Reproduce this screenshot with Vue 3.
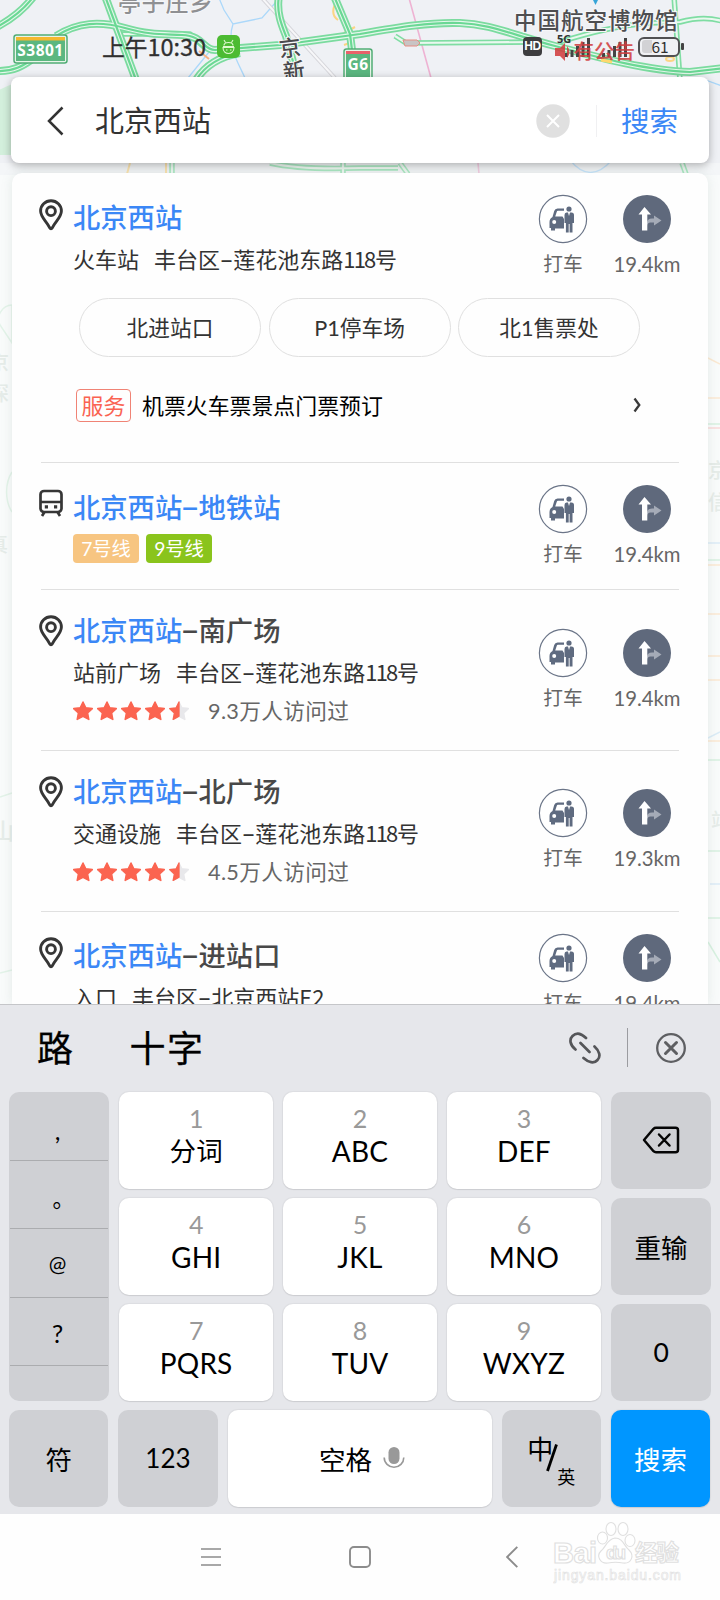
<script setup>
const places = [
  { kind: 'first', icon: 'pin', name: '北京西站', rest: '', type: '火车站', area: '丰台区', road: '莲花池东路', num: '118', tail: '号', km: '19.4km', pills: ['北进站口', 'P1停车场', '北1售票处'] },
  { kind: 'metro', icon: 'bus', name: '北京西站', rest: '地铁站', blueRest: true, km: '19.4km', lines: [{ t: '7号线', c: 'orange' }, { t: '9号线', c: 'green' }] },
  { kind: 'rated', icon: 'pin', name: '北京西站', rest: '南广场', type: '站前广场', area: '丰台区', road: '莲花池东路', num: '118', tail: '号', km: '19.4km', visits: '9.3万人访问过' },
  { kind: 'rated second', icon: 'pin', name: '北京西站', rest: '北广场', type: '交通设施', area: '丰台区', road: '莲花池东路', num: '118', tail: '号', km: '19.3km', visits: '4.5万人访问过' },
  { kind: 'last', icon: 'pin', name: '北京西站', rest: '进站口', type: '入口', area: '丰台区', road: '北京西站', num: 'E2', tail: '', km: '19.4km' },
]
const keys = [
  [['1', '分词'], ['2', 'ABC'], ['3', 'DEF']],
  [['4', 'GHI'], ['5', 'JKL'], ['6', 'MNO']],
  [['7', 'PQRS'], ['8', 'TUV'], ['9', 'WXYZ']],
]
const roads = [
  'M-5,28 Q20,15 34,-4',
  'M-5,71 C14,72 24,65 31,60',
  'M56,36 C78,22 100,21 125,28 S160,34 182,35 S203,50 215,50 L280,45 L360,34 C400,27 430,22 460,23 S510,34 555,46 S650,71 690,72 L725,68',
  'M105,-4 L136,80',
  'M279,-4 C276,12 282,26 286,36 L298,80',
  'M334,-4 L350,34 L352,50',
  'M196,80 Q210,58 240,53',
]
const thin = ['M395,36 L406,43 L540,42', 'M120,34 L190,34 L205,48', 'M560,42 Q610,26 650,23 L680,22 Q705,15 725,22', 'M674,-4 L680,80', 'M172,163 V174', 'M343,163 V174', 'M270,163 Q300,170 360,168 L398,168', 'M400,163 L408,174', 'M682,163 L686,174']
const starPath = 'M10 1 L12.8 6.8 L19.3 7.6 L14.6 12 L15.8 18.4 L10 15.3 L4.2 18.4 L5.4 12 L.7 7.6 L7.2 6.8 Z'
</script>

<template>
  <div class="phone">
    <svg class="map" viewBox="0 0 720 1004" width="720" height="1004">
      <rect width="720" height="1004" fill="#eff1f5" />
      <path d="M-5,92 Q15,82 24,80 V155 L-5,155Z" fill="#d3efdc" />
      <g fill="none" stroke="#abd8fa" stroke-width="1.3">
        <path d="M219,-2 L224,10 L233,24 L262,18 L276,2 M233,24 C226,45 238,62 245,78 M209,52 L188,78 M700,78 L722,86 M570,160 Q590,185 612,160" />
      </g>
      <path d="M262,-2 L335,78" fill="none" stroke="#d5d5da" stroke-width="4" />
      <path d="M262,-2 L335,78" fill="none" stroke="#f7f7f9" stroke-width="2" />
      <path d="M409,-2 L431,78 M478,163 L479,174" fill="none" stroke="#eeb3d3" stroke-width="1.6" />
      <g fill="none" stroke="#fbd584" stroke-width="2">
        <path d="M337,0 Q329,14 338,20 M344,33 L355,27 M344,45 L352,42 M130,163 L127,174 M166,163 V174" />
        <ellipse cx="670" cy="59" rx="4" ry="2" />
      </g>
      <g fill="none" stroke-linejoin="round">
        <path v-for="d in thin" :key="d" :d="d" stroke="#7fdda3" stroke-width="5.500" />
        <path v-for="d in thin" :key="d + 'i'" :d="d" stroke="#e9f8ef" stroke-width="2.200" />
        <path v-for="d in roads" :key="d + 'a'" :d="d" stroke="#7bdb9f" stroke-width="8" />
        <path v-for="d in roads" :key="d + 'b'" :d="d" stroke="#e4f7ec" stroke-width="4.400" />
        <path v-for="d in roads" :key="d + 'c'" :d="d" stroke="#6ad894" stroke-width="2.200" />
      </g>
      <path d="M199,51 L209,59" stroke="#f7b183" stroke-width="2" />
      <path d="M601,60 L612,62" stroke="#ffd86e" stroke-width="3" />
      <path d="M403,40 h14 l3,3 l-3,3 h-12z" fill="#c9c4c4" stroke="#e58d83" stroke-width="1" />
      <path d="M593,0 h5 l-2.500,5z" fill="#37a5d8" />
      <g class="label">
        <text x="118" y="11" font-size="23" fill="#8f9093" letter-spacing="0.8">亭子庄乡</text>
        <text x="514" y="29" font-size="22.500" fill="#4e4e50" letter-spacing="1">中国航空博物馆</text>
        <text x="279" y="56" font-size="22" fill="#4a4a4c" transform="rotate(-7 290 48)">京</text>
        <text x="283" y="79" font-size="22" fill="#4a4a4c" transform="rotate(-7 294 72)">新</text>
      </g>
      <g>
        <rect x="14" y="35" width="53" height="28" rx="2.500" fill="#e8f5e9" stroke="#51ad75" stroke-width="1.500" />
        <rect x="16" y="40" width="49" height="21" fill="#5bb780" />
        <rect x="16" y="37" width="49" height="3.500" fill="#f5b82e" />
        <text x="40.500" y="55.500" text-anchor="middle" class="shield" font-size="15.500">S3801</text>
        <rect x="344" y="49" width="28" height="32" rx="2.500" fill="#e8f5e9" stroke="#51ad75" stroke-width="1.500" />
        <rect x="346" y="54" width="24" height="25" fill="#5bb780" />
        <rect x="346" y="51" width="24" height="3" fill="#e9616a" />
        <text x="358" y="70" text-anchor="middle" class="shield" font-size="15.500">G6</text>
      </g>
      <rect y="163" width="720" height="841" fill="#fff" opacity=".35" />
      <rect y="175" width="720" height="829" fill="#fafcfb" opacity=".9" />
      <g fill="none" stroke-width="1.500">
        <path d="M0,325 a14,14 0 0 1 12,-20 v38z M12,472 a18,28 0 0 0 0,40 M0,797 L12,793 M0,973 L12,970" stroke="#e3f3e9" />
        <path d="M708,424 h12 M708,560 h12 M708,760 h12 M708,851 h12 M708,918 h12 M708,942 L720,962" stroke="#d8f1e1" />
        <path d="M708,358 L720,364 M708,398 h12 M708,565 h12 M708,614 h12 M708,656 h12 M708,680 h12 M708,741 h12" stroke="#fbe9d3" />
        <path d="M708,428 h12" stroke="#f9dada" />
        <path d="M708,543 h12 M708,738 l12,-6 M710,884 h10" stroke="#dbecf7" />
      </g>
      <g class="label ghost">
        <text x="-11" y="370" font-size="20">京</text>
        <text x="-11" y="401" font-size="20">深</text>
        <text x="-12" y="552" font-size="20">真</text>
        <text x="-8" y="839" font-size="22">山</text>
        <text x="708" y="478" font-size="20">京</text>
        <text x="708" y="510" font-size="20">信</text>
        <text x="711" y="828" font-size="20">站</text>
      </g>
    </svg>

    <header class="status">
      <span class="clock">上午<span class="time">10:30</span></span>
      <svg class="android" width="23" height="23" viewBox="0 0 23 23">
        <rect width="23" height="23" rx="5" fill="#4cbb32" />
        <g fill="none" stroke="#dff8cf" stroke-width="1.100"><path d="M6 11.500h11M7 10.500c0-4 9-4 9 0M6 12.500h11c0 8-11 8-11 0zM7 5l1.500 2.500M16 5l-1.500 2.500M9 15h1.500M13 15h1.500" /></g>
      </svg>
      <span class="hd">HD</span>
      <svg class="signals" width="84" height="32" viewBox="0 0 84 32">
        <text x="5" y="14" class="five">5G</text>
        <g fill="#444"><rect x="13" y="24" width="3" height="4" /><rect x="18.500" y="21" width="3" height="7" /><rect x="24" y="17" width="3" height="11" /><rect x="29.500" y="13" width="3" height="15" /><rect x="35" y="9" width="3" height="19" /><rect x="50" y="24" width="3" height="4" /><rect x="55.500" y="21" width="3" height="7" /><rect x="61" y="17" width="3" height="11" /><rect x="66.500" y="13" width="3" height="15" /><rect x="72" y="9" width="3" height="19" /></g>
        <path d="M3 19h5l5-5v18l-5-5H3z M15 17q5 6 0 12" fill="#d13d3f" opacity=".88" />
        <text x="21.500" y="30" class="notice">有公告</text>
      </svg>
      <span class="battery"><span class="level"></span><span class="pct">61</span></span><i class="nub"></i>
    </header>

    <section class="search">
      <svg class="back" width="18" height="30" viewBox="0 0 18 30"><path d="M15.500 1.500 L2 15 L15.500 28.500" fill="none" stroke="#333" stroke-width="2.500" /></svg>
      <span class="query">北京西站</span>
      <svg class="clear" width="34" height="34" viewBox="0 0 34 34"><circle cx="17" cy="17" r="16.700" fill="#e0e0e0" /><path d="M11 11l12 12M23 11L11 23" stroke="#fff" stroke-width="2" /></svg>
      <i class="sep"></i>
      <span class="go">搜索</span>
    </section>

    <main class="results">
      <article v-for="(p, i) in places" :key="i" class="place" :class="p.kind">
        <div class="lead">
          <svg v-if="p.icon === 'pin'" width="24" height="32" viewBox="0 0 24 32" fill="none" stroke="#363636">
            <path d="M12 1.800 C6.200 1.800 1.600 6.200 1.600 12 C1.600 18.500 8 22.500 10.500 28.500 Q12 31 13.500 28.500 C16 22.500 22.400 18.500 22.400 12 C22.400 6.200 17.800 1.800 12 1.800Z" stroke-width="2.900" />
            <circle cx="12" cy="12.200" r="4.400" stroke-width="2.900" />
          </svg>
          <svg v-else width="24" height="28" viewBox="0 0 24 28" fill="none" stroke="#363636" stroke-width="2.700">
            <rect x="1.500" y="2" width="21" height="21" rx="3.500" /><path d="M1.500 13h21M5.500 23l-2.500 4M18.500 23l2.500 4" /><path d="M5.800 17.900h3.200M15 17.900h3.200" stroke-width="3.200" />
          </svg>
        </div>
        <div class="info">
          <h2><span class="hit">{{ p.name }}</span><span v-if="p.rest" :class="{ hit: p.blueRest }"><i class="dash">-</i>{{ p.rest }}</span></h2>
          <p v-if="p.type" class="addr"><span class="type">{{ p.type }}</span><span>{{ p.area }}<i class="dash">-</i>{{ p.road }}<span class="num">{{ p.num }}</span>{{ p.tail }}</span></p>
          <div v-if="p.lines" class="lines"><span v-for="l in p.lines" :key="l.t" :class="l.c">{{ l.t }}</span></div>
          <div v-if="p.visits" class="rating">
            <svg v-for="n in 5" :key="n" width="24" height="20" viewBox="0 0 24 20">
              <path :d="starPath" :fill="n < 5 ? '#fb6450' : '#e8e8eb'" :stroke="n < 5 ? '#fb6450' : '#e8e8eb'" stroke-width="1.500" stroke-linejoin="round" />
              <path v-if="n === 5" d="M10 1 L7.200 6.800 L.7 7.600 L5.400 12 L4.200 18.400 L10 15.300Z" fill="#fb6450" stroke="#fb6450" stroke-width="1.300" stroke-linejoin="round" />
            </svg>
            <span class="visits">{{ p.visits }}</span>
          </div>
          <template v-if="p.pills">
            <div class="pills"><span v-for="t in p.pills" :key="t">{{ t }}</span></div>
            <div class="service"><b>服务</b><span>机票火车票景点门票预订</span>
              <svg width="9" height="16" viewBox="0 0 9 16"><path d="M1.500 1.500 L6.300 8 L1.500 14.500" fill="none" stroke="#3a3a3a" stroke-width="2.300" /></svg>
            </div>
          </template>
        </div>
        <div class="action taxi">
          <svg width="50" height="50" viewBox="0 0 50 50">
            <circle cx="25" cy="25" r="23.600" fill="#fff" stroke="#6b7588" stroke-width="1.200" />
            <g fill="#5f6b80">
              <path fill-rule="evenodd" d="M26 14.500 H19.500 Q17 14.500 16.200 17 L14.500 23 Q11.500 24.500 11.500 28 V34 H13 V36.500 H17 V34.500 H26 V25 L24.500 22.500 H17.200 L18.700 18 Q19 16.800 20 16.800 H26Z M16.200 26 a2 2 0 1 1 0 4 a2 2 0 0 1 0-4z" />
              <circle cx="31" cy="15" r="2.600" />
              <path d="M28.500 18.500 H30 L31 22 L32 18.500 H33.500 Q36 18.500 36 21 V29 H34.500 V38.500 H31.600 V30 H30.700 V38.500 H27.900 V29 H26.500 V21 Q26.500 18.500 28.500 18.500Z" />
            </g>
          </svg>
          <span>打车</span>
        </div>
        <div class="action route">
          <svg width="50" height="50" viewBox="0 0 50 50">
            <circle cx="25" cy="25" r="24" fill="#5f697c" />
            <path d="M25 32 V29 Q25 24.500 30 24.500 H32 V21.500 L39.500 26.500 L32 31.500 V28.500 H28 Q25 29 25 32Z" fill="#a5abb7" />
            <path d="M22.500 13 L29 20.500 H25.300 V36.500 H20 V20.500 H16.500Z" fill="#fff" />
          </svg>
          <span>{{ p.km }}</span>
        </div>
      </article>
    </main>

    <section class="keyboard">
      <div class="suggest">
        <span class="c1">路</span><span class="c2">十字</span>
        <svg class="link" width="34" height="34" viewBox="0 0 34 34" fill="none" stroke="#555659" stroke-width="2.700" stroke-linecap="round">
          <path d="M7.500 18.500 C2 14 1 8.500 4.500 5 C8.500 1 13.500 2.500 18 7 M15.500 27 C20.500 31.500 26 33 29.500 29 C33 25.500 31.500 20 26.500 15.500 M12.500 12 L21.500 21" />
        </svg>
        <i class="bar"></i>
        <svg class="close" width="32" height="32" viewBox="0 0 32 32" fill="none" stroke="#5e5f62"><circle cx="16" cy="16" r="13.800" stroke-width="2.300" /><path d="M10.500 10.500l11 11M21.500 10.500l-11 11" stroke-width="3" stroke-linecap="round" /></svg>
      </div>
      <div class="grid">
        <div class="key grey marks"><span>,</span><span class="stop">。</span><span class="at">@</span><span class="ask">?</span><span></span></div>
        <template v-for="(row, r) in keys" :key="r">
          <div v-for="k in row" :key="k[0]" class="key letter"><small>{{ k[0] }}</small><span>{{ k[1] }}</span></div>
          <div class="key grey side">
            <svg v-if="r === 0" width="38" height="28" viewBox="0 0 38 28" fill="none" stroke="#050505" stroke-width="2.500" stroke-linejoin="round" stroke-linecap="round"><path d="M14 1.800 H33.500 Q36 1.800 36 4.300 V23.700 Q36 26.200 33.500 26.200 H14 Q12.500 26.200 11.500 25.200 L2 14 L11.500 2.800 Q12.500 1.800 14 1.800Z M17 8.500l10.500 11M27.500 8.500L17 19.500" /></svg>
            <span v-else>{{ r === 1 ? '重输' : '0' }}</span>
          </div>
        </template>
      </div>
      <div class="bottom">
        <div class="key grey">符</div>
        <div class="key grey digits">123</div>
        <div class="key space">空格
          <svg width="22" height="24" viewBox="0 0 22 24"><rect x="5.500" y="1" width="11" height="17" rx="5.500" fill="#999" /><path d="M1.200 11.500 a9.800 9.800 0 0 0 19.600 0" fill="none" stroke="#999" stroke-width="1.600" /></svg>
        </div>
        <div class="key grey lang"><span class="zh">中</span><svg width="14" height="30" viewBox="0 0 14 30"><path d="M11.500 1.500 L2.500 28" stroke="#000" stroke-width="2.800" /></svg><span class="en">英</span></div>
        <div class="key enter">搜索</div>
      </div>
    </section>

    <nav class="nav">
      <svg width="20" height="20" viewBox="0 0 20 20"><path d="M0 2h20M0 10h20M0 18h20" stroke="#8c8c8c" stroke-width="1.700" /></svg>
      <svg width="22" height="22" viewBox="0 0 22 22"><rect x="1" y="1" width="20" height="20" rx="4" fill="none" stroke="#8c8c8c" stroke-width="1.900" /></svg>
      <svg width="12" height="22" viewBox="0 0 12 22"><path d="M11.300 .8 L1.200 11 L11.300 21.200" fill="none" stroke="#8c8c8c" stroke-width="1.900" /></svg>
      <svg class="mark" width="136" height="66" viewBox="0 0 136 66">
        <g fill="#fff" stroke="#e0e0e0" stroke-width="1.100">
          <text x="0" y="43" class="logo" font-size="29" textLength="44">Bai</text>
          <path d="M62 18 C54 19 53 27 48 31 C43 36 47 44 55 43 C60 42 65 42 70 43 C78 44 82 36 76 30 C71 26 70 18 62 18Z" />
          <ellipse cx="49.500" cy="18" rx="5" ry="6" /><ellipse cx="58" cy="9" rx="5" ry="6.500" /><ellipse cx="70" cy="9" rx="5" ry="6.500" /><ellipse cx="77" cy="20.500" rx="5" ry="6" />
          <text x="53" y="39" class="logo" font-size="19" textLength="20">du</text>
          <text x="82" y="41" class="logo" font-size="22.500" textLength="44">经验</text>
          <text x="1" y="60" class="url" font-size="14" textLength="127">jingyan.baidu.com</text>
        </g>
      </svg>
    </nav>
  </div>
</template>

<style>
body { margin: 0; background: #fff; }
</style>

<style scoped>
* { box-sizing: border-box; }
.phone { position: relative; width: 720px; height: 1600px; overflow: hidden; display: flex; flex-direction: column; font-family: Lato, "Noto Sans CJK SC", sans-serif; color: #333; background: #fefefe; }
.phone svg { flex: none; display: block; }
.map { position: absolute; left: 0; top: 0; }
.label { font-family: "Noto Sans CJK SC", sans-serif; font-weight: 500; paint-order: stroke; stroke: #f6f7f9; stroke-width: 2px; }
.ghost { fill: #e6ece9; stroke: none; }
.shield { font-family: "Open Sans", sans-serif; font-weight: 700; fill: #fff; letter-spacing: .5px; }
.status { position: relative; height: 77px; flex: none; display: flex; align-items: center; padding: 16px 0 0 102px; }
.clock { width: 115px; font-size: 22.700px; line-height: 28px; color: #2f2f2f; white-space: nowrap; -webkit-text-stroke: .3px #2f2f2f; }
.time { font-family: "Noto Sans CJK SC", sans-serif; font-size: 23.500px; }
.hd { width: 19px; height: 19px; margin-left: 283px; border-radius: 4px; background: #3d3d3f; color: #fff; font: 700 12px/19px "Liberation Sans", sans-serif; text-align: center; letter-spacing: -.5px; }
.signals { margin: -3px 0 0 10px; }
.five { font: 700 11px "Open Sans", sans-serif; fill: #333; }
.notice { font: 500 20.500px "Noto Sans CJK SC", sans-serif; fill: #d13d3f; opacity: .88; }
.battery { position: relative; width: 42px; height: 20px; margin-left: 2px; border: 2.500px solid #505052; border-radius: 6px; background: #f0f1f4; color: #303030; text-align: center; }
.level { position: absolute; left: 2px; top: 1px; width: 10px; height: 13px; border-radius: 3px 0 0 3px; background: #d2d2d5; }
.pct { position: relative; display: block; font: 400 15.500px/15px "Noto Sans CJK SC", sans-serif; padding-left: 2px; }
.nub { width: 2.500px; height: 7px; margin-left: 1px; background: #444; border-radius: 1px; }
.search { position: relative; flex: none; height: 86px; width: 698px; margin-left: 11px; border-radius: 8px; background: #fff; box-shadow: 0 2px 9px rgba(0,0,0,.3); display: flex; align-items: center; padding: 1px 31px 0 36px; }
.query { margin-left: 30px; font-size: 29px; line-height: 40px; }
.clear { margin-left: auto; }
.sep { width: 1px; height: 32px; margin: 0 24px 0 26px; background: #f0f0f2; }
.go { font-size: 28.500px; line-height: 40px; color: #3b87f6; }
.results { position: relative; flex: none; height: 831px; width: 696px; margin: 10px 0 0 12px; border-radius: 10px 10px 0 0; background: #fefefe; overflow: hidden; padding: 0 29px; box-shadow: 0 0 12px rgba(120,140,130,.16); }
.place { display: grid; grid-template-columns: 32px 1fr 86px 82px; margin-right: -10px; position: relative; height: 127px; }
.place::after { content: ""; position: absolute; left: 0; right: 10px; bottom: 0; height: 1px; background: #e0e0e0; }
.place.first { height: 290px; }
.place.rated { height: 161px; }
.place.second { height: 160.500px; }
.place.last { height: 127px; }
.lead { padding-top: 25.500px; margin-left: -2px; }
.rated .lead, .last .lead { padding-top: 25px; }
.info { padding-top: 30px; min-width: 0; white-space: nowrap; }
.metro .info { padding-top: 29.500px; }
.rated .info { padding-top: 26px; }
.last .info { padding-top: 29.500px; }
h2 { margin: 0; font-size: 27.300px; line-height: 30px; font-weight: 500; color: #484848; }
.hit { color: #3b87f6; }
.dash { display: inline-block; font-style: normal; font-family: "Liberation Sans", sans-serif; width: .6em; text-align: center; transform: translateY(-.08em) scale(2.05, 1.2); }
.addr { margin: 9px 0 0; font-size: 22px; line-height: 32px; color: #333; }
.addr .dash { transform: translateY(-.06em) scale(1.85, 1); }
.type { margin-right: 15px; }
.num { font-family: "Noto Sans CJK SC", sans-serif; letter-spacing: -1.800px; margin-right: .5px; }
.last .num { letter-spacing: 0; }
.last .addr { margin-top: 8px; }
.lines { display: flex; gap: 7px; margin-top: 10px; }
.lines span { width: 66px; height: 29px; border-radius: 4px; background: #f7c581; color: #fff; font-size: 19.300px; line-height: 29px; text-align: center; }
.lines .green { background: #8ac41c; }
.rated .addr { margin-top: 8px; }
.rating { display: flex; align-items: center; height: 32px; margin-top: 4.500px; }
.visits { margin-left: 15px; font-size: 21.700px; line-height: 32px; color: #666; letter-spacing: .3px; }
.pills { display: flex; gap: 7.500px; margin: 21px 0 0 6px; position: relative; z-index: 1; }
.pills span { flex: none; width: 182px; height: 59px; border: 1px solid #e0e0e0; border-radius: 30px; font-size: 21.700px; line-height: 58px; text-align: center; color: #333; }
.service { display: flex; align-items: center; width: 566px; margin: 31.500px 0 0 3px; font-size: 21.900px; line-height: 33px; color: #000; }
.service b { width: 55px; height: 33px; border: 1.500px solid #f08375; border-radius: 4px; margin-right: 11px; font-weight: 400; line-height: 31px; text-align: center; color: #fa6352; }
.service svg { margin-left: auto; }
.action { display: flex; flex-direction: column; align-items: center; padding-top: 21px; font-size: 19.700px; color: #666; }
.action svg { margin-bottom: 6px; }
.action span { line-height: 28px; white-space: nowrap; }
.taxi { margin-left: -1px; margin-right: 1px; }
.route { margin-left: -1px; margin-right: 1px; }
.action.route { font-size: 20.300px; }
.rated .action { padding-top: 37.500px; }
.second .action { padding-top: 37px; }
.keyboard { position: relative; flex: none; height: 510px; background: #e6e7eb; border-top: 1px solid #c5c6c9; padding: 0 9px; color: #000; }
.suggest { height: 87px; display: flex; align-items: center; font-size: 36px; line-height: 42px; padding-bottom: 2px; -webkit-text-stroke: .3px #000; }
.c1 { margin-left: 28px; }
.c2 { margin-left: 56.500px; letter-spacing: 1.500px; }
.link { margin-left: auto; }
.bar { width: 1px; height: 39px; background: #9b9ca0; margin: 0 27px 0 25.500px; }
.close { margin-right: 24px; }
.grid { display: grid; grid-template-columns: 100px 153.500px 153.500px 153.500px 100px; grid-template-rows: repeat(3, 96.500px); gap: 9.500px 10.400px; }
.key { border-radius: 10px; background: #fff; box-shadow: 0 0 1px 1px rgba(0,0,0,.04), 0 1px 1px rgba(0,0,0,.08); display: flex; align-items: center; justify-content: center; font-size: 26.500px; }
.grey { background: #cfd0d4; box-shadow: none; }
.letter { flex-direction: column; justify-content: flex-start; padding-top: 10.500px; }
.letter small { font-size: 25px; line-height: 31px; color: #999; }
.letter span { font-size: 28px; line-height: 34px; letter-spacing: .2px; }
.letter:nth-child(2) span { font-size: 26.500px; }
.marks { grid-row: 1 / 4; flex-direction: column; justify-content: flex-start; overflow: hidden; font-size: 25px; }
.marks span { width: 98px; height: 68.500px; flex: none; border-bottom: 1px solid #abacaf; text-align: center; line-height: 77px; padding-right: 3px; }
.marks .stop { font-size: 22px; line-height: 76px; padding-left: 12px; }
.marks .at { font-size: 21px; line-height: 69px; }
.marks .ask { line-height: 70px; }
.marks span:last-child { border: 0; }
.bottom { display: flex; gap: 10px; height: 96.500px; margin-top: 9.500px; }
.bottom .key { width: 99.300px; flex: none; }
.bottom .space { width: 264px; gap: 11px; padding-left: 5px; }
.bottom .digits { font-size: 26px; }
.bottom .enter { background: #0096ff; color: #fff; }
.lang .zh { font-size: 26px; margin: -22px -8px 0 0; }
.lang .en { font-size: 18px; margin: 36px 0 0 -2px; }
.nav { position: relative; flex: 1; display: flex; align-items: flex-start; padding: 32px 0 0 201px; }
.nav svg:nth-child(1) { margin-top: 1px; }
.nav svg:nth-child(2) { margin-left: 128px; }
.nav svg:nth-child(3) { margin-left: 134.500px; }
.nav .mark { margin: -26px 0 0 35px; }
.logo { font-family: "Liberation Sans", "Noto Sans CJK SC", sans-serif; font-weight: 700; }
.url { font-family: "Liberation Sans", sans-serif; stroke-width: .6; }
</style>
